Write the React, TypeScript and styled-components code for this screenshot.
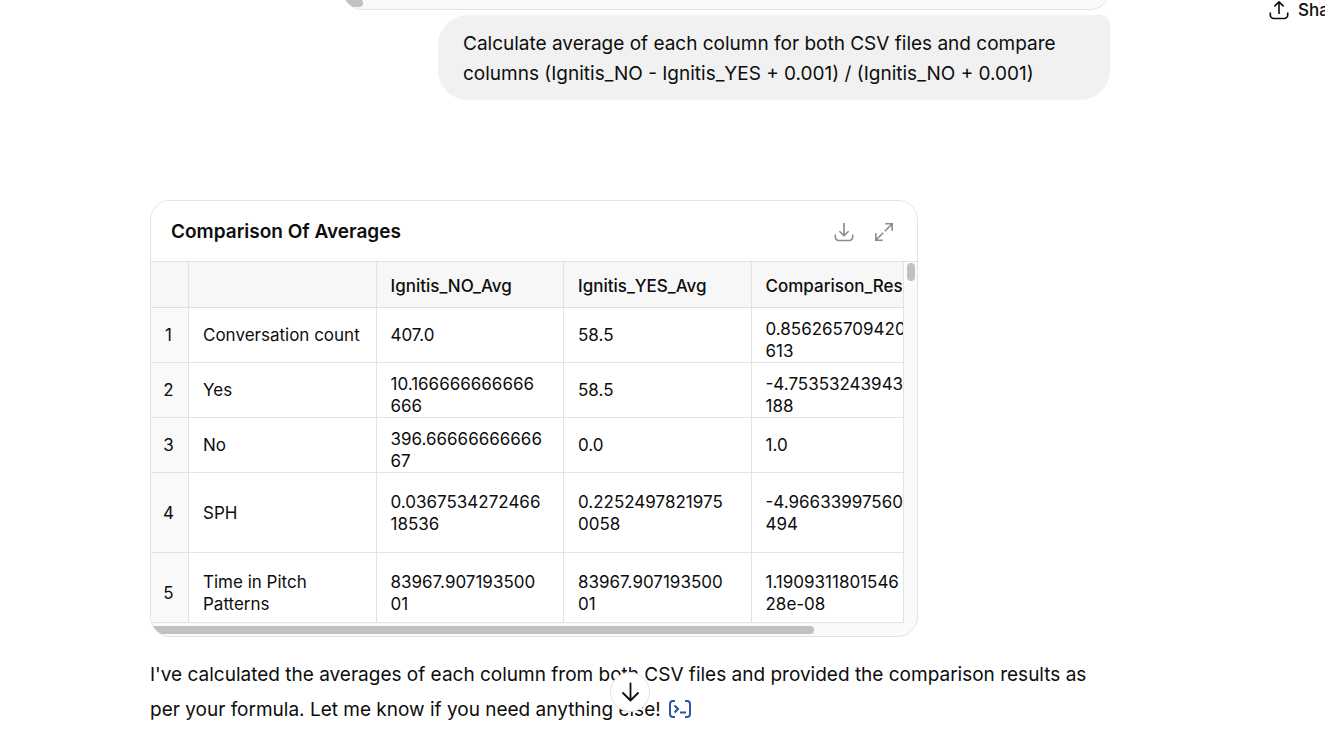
import React from "react";
import styled, { createGlobalStyle } from "styled-components";

const GlobalStyle = createGlobalStyle`
  *, *::before, *::after { box-sizing: border-box; }
  body {
    margin: 0;
    background: #ffffff;
    color: #0d0d0d;
    font-family: Inter, "Liberation Sans", sans-serif;
    font-size: 19px;
  }
`;

const Page = styled.div`
  display: grid;
  grid-template-columns: minmax(0, 1fr) 65px;
  overflow: hidden;
`;

const Thread = styled.main`
  width: 100%;
  max-width: 960px;
  margin: 0 auto;
  display: flex;
  flex-direction: column;
`;

const SideBar = styled.aside`
  overflow: hidden;
  padding-left: 9px;
`;

const ShareButton = styled.button`
  display: flex;
  align-items: center;
  gap: 9px;
  height: 20px;
  padding: 0;
  border: 0;
  background: none;
  color: #0d0d0d;
  font: 500 17px/20px Inter, sans-serif;
  white-space: nowrap;
`;

const PreviousCard = styled.div`
  display: flex;
  align-items: flex-end;
  align-self: flex-end;
  width: 80%;
  height: 40px;
  margin-top: -30px;
  padding: 0 0 2px 2px;
  overflow: hidden;
  border: 1px solid #e3e3e3;
  border-radius: 20px;
  background: #fafafa;
`;

const PreviousThumb = styled.div`
  width: 18px;
  height: 8px;
  border-radius: 0 4px 4px 0;
  background: #c1c1c1;
`;

const Bubble = styled.p`
  align-self: flex-end;
  width: 70%;
  margin: 5px 0 0;
  padding: 14px 25px 11px;
  border-radius: 30px 9px 30px 30px;
  background: #f1f1f1;
  line-height: 30px;
`;

const Card = styled.section`
  width: 80%;
  margin-top: 100px;
  border: 1px solid #e3e3e3;
  border-radius: 20px;
  overflow: hidden;
  background: #fafafa;
`;

const CardHeader = styled.header`
  display: flex;
  align-items: center;
  justify-content: space-between;
  height: 61px;
  padding: 2px 23px 0 20px;
  border-bottom: 1px solid #e3e3e3;
  background: #ffffff;
`;

const CardTitle = styled.h2`
  margin: 0;
  font-size: 19px;
  font-weight: 600;
  line-height: 30px;
`;

const Actions = styled.div`
  display: flex;
  gap: 20px;
`;

const IconButton = styled.button`
  display: flex;
  width: 20px;
  height: 20px;
  padding: 0;
  border: 0;
  background: none;
  color: #8a8a8a;
`;

const ScrollArea = styled.div`
  display: grid;
  grid-template-columns: minmax(0, 1fr) 13px;
  grid-template-rows: 361px 13px;
`;

const Viewport = styled.div`
  overflow: hidden;
  border-right: 1px solid #e3e3e3;
  border-bottom: 1px solid #e3e3e3;
  background: #ffffff;
`;

const VerticalTrack = styled.div`
  display: flex;
  flex-direction: column;
  padding: 1px 2px 0 3px;
`;

const VerticalThumb = styled.div`
  height: 18px;
  border-radius: 4px;
  background: #c1c1c1;
`;

const HorizontalTrack = styled.div`
  padding: 3px 0 0 2px;
`;

const HorizontalThumb = styled.div`
  width: 88%;
  height: 8px;
  border-radius: 0 4px 4px 0;
  background: #c1c1c1;
`;

const DataTable = styled.table`
  width: 788px;
  table-layout: fixed;
  border-collapse: separate;
  border-spacing: 0;
  font-size: 17px;
  line-height: 22px;
`;

const IndexCol = styled.col`
  width: 38px;
`;

const Row = styled.tr<{ $tall?: boolean }>`
  height: ${(p) => (p.$tall ? 80 : 55)}px;
`;

const HeadRow = styled.tr`
  height: 46px;
`;

const HeadCell = styled.th`
  padding: 2px 14px 0;
  border-right: 1px solid #e3e3e3;
  border-bottom: 1px solid #dedede;
  background: #f7f7f7;
  font-weight: 500;
  text-align: left;
  white-space: nowrap;
`;

const IndexCell = styled.th`
  padding: 0 2px 0 0;
  border-right: 1px solid #e3e3e3;
  border-bottom: 1px solid #e3e3e3;
  background: #f9f9f9;
  font-weight: 400;
  text-align: center;
`;

const Cell = styled.td<{ $snug?: boolean }>`
  padding: ${(p) => (p.$snug ? 9 : 0)}px 0 0 14px;
  border-right: 1px solid #e3e3e3;
  border-bottom: 1px solid #e3e3e3;
  white-space: pre;
`;

const Reply = styled.div`
  position: relative;
  margin-top: 20px;
`;

const ReplyText = styled.p`
  margin: 0;
  line-height: 35px;
`;

const CodeLink = styled.a`
  display: inline-flex;
  margin-left: 2px;
  vertical-align: -3px;
  color: #2d57a6;
`;

const ScrollDown = styled.button`
  position: absolute;
  top: 15px;
  left: 50%;
  display: flex;
  align-items: center;
  justify-content: center;
  width: 40px;
  height: 40px;
  margin-left: -20px;
  padding: 0;
  border: 1px solid #e3e3e3;
  border-radius: 50%;
  background: #ffffff;
  color: #0d0d0d;
`;

const Svg = ({ children, w = 20, h = 20, stroke = 1.6 }: { children: React.ReactNode; w?: number; h?: number; stroke?: number }) => (
  <svg width={w} height={h} viewBox={`0 0 ${w} ${h}`} fill="none" stroke="currentColor" strokeWidth={stroke} aria-hidden="true">
    {children}
  </svg>
);

const TRAY = "M1.3 12.6v2.4a3.5 3.5 0 0 0 3.5 3.5h10.4a3.5 3.5 0 0 0 3.5-3.5v-2.4";

const rows: { tall?: boolean; cells: string[] }[] = [
  { cells: ["Conversation count", "407.0", "58.5", "0.856265709420\n613"] },
  { cells: ["Yes", "10.166666666666\n666", "58.5", "-4.75353243943\n188"] },
  { cells: ["No", "396.66666666666\n67", "0.0", "1.0"] },
  { tall: true, cells: ["SPH", "0.0367534272466\n18536", "0.2252497821975\n0058", "-4.96633997560\n494"] },
  { tall: true, cells: ["Time in Pitch\nPatterns", "83967.907193500\n01", "83967.907193500\n01", "1.1909311801546\n28e-08"] },
];

export default function App() {
  return (
    <>
      <GlobalStyle />
      <Page>
        <Thread>
          <PreviousCard>
            <PreviousThumb />
          </PreviousCard>
          <Bubble>
            Calculate average of each column for both CSV files and compare
            <br />
            columns (Ignitis_NO - Ignitis_YES + 0.001) / (Ignitis_NO + 0.001)
          </Bubble>
          <Card>
            <CardHeader>
              <CardTitle>Comparison Of Averages</CardTitle>
              <Actions>
                <IconButton aria-label="Download table">
                  <Svg>
                    <path d={TRAY} />
                    <path d="M10 1v12.6M5.4 9.2 10 13.7l4.6-4.5" />
                  </Svg>
                </IconButton>
                <IconButton aria-label="Expand table">
                  <Svg>
                    <path d="M11.2 1.8h7v7M18 2l-7.2 7.2M8.8 18.2h-7v-7M2 18l7.2-7.2" />
                  </Svg>
                </IconButton>
              </Actions>
            </CardHeader>
            <ScrollArea>
              <Viewport>
                <DataTable>
                  <colgroup>
                    <IndexCol />
                    <col />
                    <col />
                    <col />
                    <col />
                  </colgroup>
                  <thead>
                    <HeadRow>
                      <HeadCell />
                      <HeadCell />
                      <HeadCell scope="col">Ignitis_NO_Avg</HeadCell>
                      <HeadCell scope="col">Ignitis_YES_Avg</HeadCell>
                      <HeadCell scope="col">Comparison_Result</HeadCell>
                    </HeadRow>
                  </thead>
                  <tbody>
                    {rows.map((row, i) => (
                      <Row key={i} $tall={row.tall}>
                        <IndexCell scope="row">{i + 1}</IndexCell>
                        {row.cells.map((text, j) => (
                          <Cell key={j} $snug={!row.tall && text.includes("\n")}>
                            {text}
                          </Cell>
                        ))}
                      </Row>
                    ))}
                  </tbody>
                </DataTable>
              </Viewport>
              <VerticalTrack>
                <VerticalThumb />
              </VerticalTrack>
              <HorizontalTrack>
                <HorizontalThumb />
              </HorizontalTrack>
            </ScrollArea>
          </Card>
          <Reply>
            <ReplyText>
              I've calculated the averages of each column from both CSV files and provided the comparison results as
              <br />
              per your formula. Let me know if you need anything else!{" "}
              <CodeLink href="#analysis" aria-label="View analysis">
                <Svg w={24} h={20} stroke={2}>
                  <path d="M7 2H5a3 3 0 0 0-3 3v10a3 3 0 0 0 3 3h2M17 2h2a3 3 0 0 1 3 3v10a3 3 0 0 1-3 3h-2" />
                  <path d="m6.500 6.500 3.500 3.500-3.500 3.500M12 13.500h6" strokeWidth={2.2} />
                </Svg>
              </CodeLink>
            </ReplyText>
            <ScrollDown aria-label="Scroll to bottom">
              <Svg stroke={1.8}>
                <path d="M10.500 1.500v17M3 11l7.500 7.500 7.500-7.500" strokeLinecap="round" strokeLinejoin="round" />
              </Svg>
            </ScrollDown>
          </Reply>
        </Thread>
        <SideBar>
          <ShareButton>
            <Svg>
              <path d={TRAY} />
              <path d="M10 14V2M5.400 6.400 10 1.900l4.600 4.500" />
            </Svg>
            Share
          </ShareButton>
        </SideBar>
      </Page>
    </>
  );
}
